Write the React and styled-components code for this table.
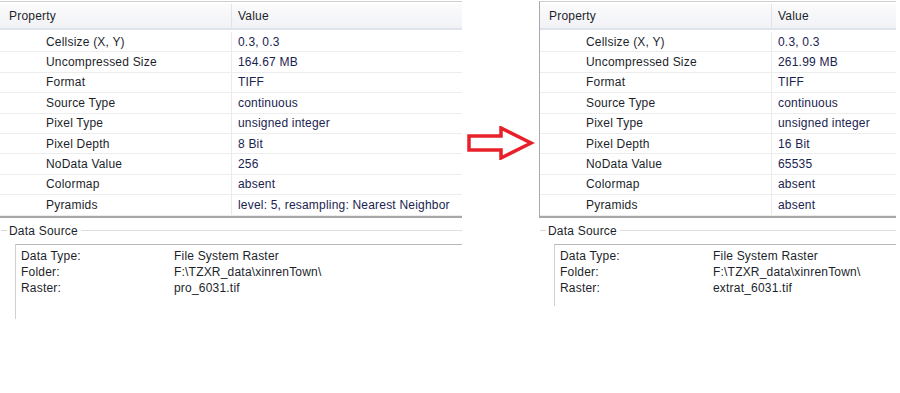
import React from "react";
import styled, { createGlobalStyle } from "styled-components";

const GlobalStyle = createGlobalStyle`
  html, body {
    margin: 0;
    padding: 0;
    background: #ffffff;
  }
  body {
    font-family: "Liberation Sans", Arial, sans-serif;
    font-size: 12px;
    letter-spacing: 0.2px;
    color: #1d1f2b;
  }
`;

const leftProps = [
  ["Cellsize (X, Y)", "0.3, 0.3"],
  ["Uncompressed Size", "164.67 MB"],
  ["Format", "TIFF"],
  ["Source Type", "continuous"],
  ["Pixel Type", "unsigned integer"],
  ["Pixel Depth", "8 Bit"],
  ["NoData Value", "256"],
  ["Colormap", "absent"],
  ["Pyramids", "level: 5, resampling: Nearest Neighbor"],
];

const rightProps = [
  ["Cellsize (X, Y)", "0.3, 0.3"],
  ["Uncompressed Size", "261.99 MB"],
  ["Format", "TIFF"],
  ["Source Type", "continuous"],
  ["Pixel Type", "unsigned integer"],
  ["Pixel Depth", "16 Bit"],
  ["NoData Value", "65535"],
  ["Colormap", "absent"],
  ["Pyramids", "absent"],
];

const RasterPanel = ({ width, bordered, rows, raster, listHeight }) => (
  <Panel $width={width}>
    <Table $bordered={bordered}>
      <HeaderRow>
        <HeadCell>Property</HeadCell>
        <HeadCell $value>Value</HeadCell>
      </HeaderRow>
      {rows.map(([name, value]) => (
        <Row key={name}>
          <NameCell>{name}</NameCell>
          <ValueCell>{value}</ValueCell>
        </Row>
      ))}
    </Table>
    <Group>
      <GroupTitle>
        <Stub />
        <Legend>Data Source</Legend>
        <Rule />
      </GroupTitle>
      <InfoBox $height={listHeight}>
        <InfoLine>
          <span>Data Type:</span>
          <span>File System Raster</span>
        </InfoLine>
        <InfoLine>
          <span>Folder:</span>
          <span>F:\TZXR_data\xinrenTown\</span>
        </InfoLine>
        <InfoLine>
          <span>Raster:</span>
          <span>{raster}</span>
        </InfoLine>
      </InfoBox>
    </Group>
  </Panel>
);

const App = () => {
  return (
    <Page>
      <GlobalStyle />
      <RasterPanel
        width={462}
        rows={leftProps}
        raster="pro_6031.tif"
        listHeight={75}
      />
      <ArrowSlot>
        <svg width="68" height="34" viewBox="0 0 68 34">
          <path
            d="M2 10 H34 V2 L64 17 L34 32 V24 H2 Z"
            fill="none"
            stroke="#e8202a"
            strokeWidth="3.5"
            strokeLinejoin="miter"
          />
        </svg>
      </ArrowSlot>
      <RasterPanel
        width={357}
        bordered
        rows={rightProps}
        raster="extrat_6031.tif"
        listHeight={62}
      />
    </Page>
  );
};

const Page = styled.div`
  display: flex;
  align-items: flex-start;
  width: 900px;
  height: 393px;
`;

const Panel = styled.div`
  display: flex;
  flex-direction: column;
  width: ${(p) => p.$width}px;
`;

const Table = styled.div`
  margin-top: 1px;
  border-top: 1px solid #cfcfcf;
  border-left: ${(p) => (p.$bordered ? "1px solid #a9a9a9" : "none")};
  border-bottom: 2px solid #a8a8a8;
  padding-top: 2px;
`;

const HeaderRow = styled.div`
  display: grid;
  grid-template-columns: 231px 1fr;
  height: 24px;
  background: linear-gradient(#fbfbfc, #f1f2f6);
  border-bottom: 2px solid #dfe3ea;
  margin-bottom: 2px;
`;

const HeadCell = styled.div`
  display: flex;
  align-items: center;
  padding-left: ${(p) => (p.$value ? "6px" : "9px")};
  border-left: ${(p) => (p.$value ? "1px solid #e4e4e8" : "none")};
  color: #1d1f2b;
`;

const Row = styled.div`
  display: grid;
  grid-template-columns: 231px 1fr;
  height: 20.4px;
  box-sizing: border-box;
  border-bottom: 1px solid #ededed;
`;

const NameCell = styled.div`
  display: flex;
  align-items: center;
  padding-left: 46px;
  white-space: nowrap;
`;

const ValueCell = styled.div`
  display: flex;
  align-items: center;
  padding-left: 6px;
  border-left: 1px solid #ebebeb;
  white-space: nowrap;
  overflow: hidden;
  color: #1a2350;
`;

const Group = styled.div`
  display: flex;
  flex-direction: column;
  margin-top: 5px;
`;

const GroupTitle = styled.div`
  display: flex;
  align-items: center;
  height: 16px;
`;

const Stub = styled.div`
  width: 6px;
  margin-left: 1px;
  border-top: 1px solid #d8d8d8;
`;

const Legend = styled.span`
  padding: 0 3px 0 2px;
`;

const Rule = styled.div`
  flex: 1;
  border-top: 1px solid #dedede;
`;

const InfoBox = styled.div`
  display: flex;
  flex-direction: column;
  margin: 5px 0 0 15px;
  height: ${(p) => p.$height}px;
  box-sizing: border-box;
  padding: 3px 0 0 5px;
  border-top: 1px solid #b8b8b8;
  border-left: 1px solid #d0d0d0;
`;

const InfoLine = styled.div`
  display: grid;
  grid-template-columns: 153px 1fr;
  height: 16px;
  line-height: 16px;
  white-space: nowrap;
`;

const ArrowSlot = styled.div`
  display: flex;
  justify-content: center;
  width: 77px;
  padding-top: 126px;
`;

export default App;
